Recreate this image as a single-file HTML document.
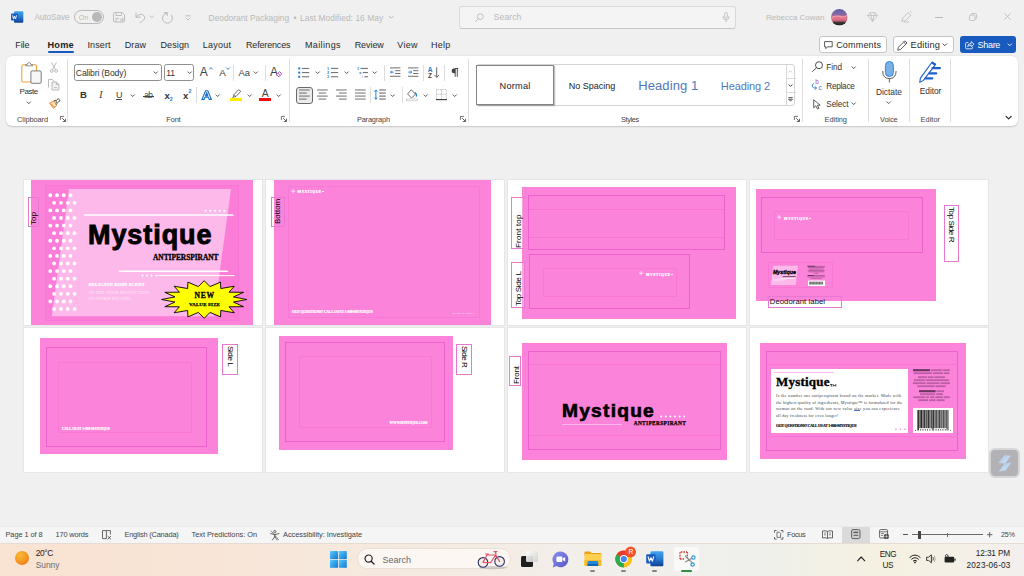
<!DOCTYPE html>
<html>
<head>
<meta charset="utf-8">
<title>Deodorant Packaging - Word</title>
<style>
*{box-sizing:border-box;margin:0;padding:0}
html,body{width:1024px;height:576px;overflow:hidden}
body{background:#f0f0f0;font-family:"Liberation Sans",sans-serif;position:relative;color:#262626}
.abs{position:absolute}
.t{position:absolute;white-space:nowrap;line-height:1}
svg{overflow:visible}
.page{position:absolute;background:#fff;box-shadow:0 0 0 0.9px #e5e5e5}
.pink{position:absolute;background:#fb83d9}
.ol{position:absolute;border:1px solid #ec62cc}
.ol2{position:absolute;border:1px solid #f977d5}
.lbl{position:absolute;border:1px solid #e879d2}
.rot{position:absolute;white-space:nowrap;line-height:1;font-size:8px;color:#000;transform-origin:0 0}
.vsep{position:absolute;width:1px;background:#dedede}
</style>
</head>
<body>
<div class="abs" style="left:0.00px;top:0.00px;width:1024.00px;height:56.00px;background:#f0f0f0"></div>
<svg class="abs" style="left:11.00px;top:11.00px;" width="12.50" height="12.00" viewBox="0 0 12.5 12"><defs><linearGradient id="wg" x1="0" y1="0" x2="0" y2="1"><stop offset="0" stop-color="#41a5ee"/><stop offset=".5" stop-color="#2b7cd3"/><stop offset="1" stop-color="#103f91"/></linearGradient></defs><rect x="3" y="0.3" width="9.3" height="11.4" rx="1" fill="url(#wg)"/><rect x="0" y="2.6" width="7" height="7" rx="0.8" fill="#185abd"/><path d="M1.5 4.3 L2.5 8 L3.5 5.2 L4.5 8 L5.5 4.3" fill="none" stroke="#fff" stroke-width="0.9" stroke-linejoin="round"/></svg>
<span class="t" style="left:34.40px;top:14.37px;font-size:8.20px;color:#b9b9b9;letter-spacing:-0.042px;">AutoSave</span>
<div class="abs" style="left:74.00px;top:10.30px;width:29.80px;height:13.50px;border:1px solid #b9b9b9;border-radius:7px"></div>
<span class="t" style="left:78.80px;top:14.39px;font-size:7.00px;color:#b9b9b9;letter-spacing:-0.096px;">On</span>
<div class="abs" style="left:92.10px;top:12.30px;width:9.50px;height:9.50px;background:#b9b9b9;border-radius:50%"></div>
<svg class="abs" style="left:113.00px;top:12.00px;" width="12.00" height="10.50" viewBox="0 0 12 10.5"><path d="M0.5 1.5 Q0.5 0.5 1.5 0.5 H9.5 L11.5 2.5 V9 Q11.5 10 10.5 10 H1.5 Q0.5 10 0.5 9 Z" fill="none" stroke="#b9b9b9" stroke-width="0.9"/><path d="M3 0.5 V3.5 H8.5 V0.5 M3 10 V6.5 H6" fill="none" stroke="#b9b9b9" stroke-width="0.9"/><path d="M7 7.2 H10.5 M9.3 6 L10.6 7.2 L9.3 8.4 M10.5 9 H7" fill="none" stroke="#b9b9b9" stroke-width="0.8"/></svg>
<svg class="abs" style="left:134.50px;top:11.50px;" width="11.00" height="11.00" viewBox="0 0 11 11"><path d="M1 1 V5.2 H5.2" fill="none" stroke="#b9b9b9" stroke-width="1" stroke-linecap="round" stroke-linejoin="round"/><path d="M1.2 5 C3 2.5 6.5 1.3 8.7 3.5 C10.8 5.6 9.5 8.3 5 10.6" fill="none" stroke="#b9b9b9" stroke-width="1" stroke-linecap="round"/></svg>
<svg class="abs" style="left:149.20px;top:15.20px;" width="5.60" height="4.60" viewBox="0 0 5.6 4.6"><path d="M1 0.90 L2.80 2.70 L4.60 0.90" fill="none" stroke="#b9b9b9" stroke-width="0.90" stroke-linecap="round" stroke-linejoin="round"/></svg>
<svg class="abs" style="left:162.00px;top:11.50px;" width="11.50" height="11.50" viewBox="0 0 11.5 11.5"><path d="M5 1.2 A5 5 0 1 0 9.5 3.2" fill="none" stroke="#b9b9b9" stroke-width="1" stroke-linecap="round"/><path d="M2.2 0.6 H5.2 V3.6" fill="none" stroke="#b9b9b9" stroke-width="1" stroke-linecap="round" stroke-linejoin="round"/></svg>
<svg class="abs" style="left:185.00px;top:14.50px;" width="6.00" height="6.00" viewBox="0 0 6 6"><path d="M0.6 0.8 H5.4" stroke="#b9b9b9" stroke-width="0.9"/><path d="M0.8 2.8 L3 5 L5.2 2.8" fill="none" stroke="#b9b9b9" stroke-width="0.9"/></svg>
<span class="t" style="left:208.60px;top:13.99px;font-size:8.40px;color:#b9b9b9;letter-spacing:-0.003px;">Deodorant Packaging</span>
<span class="t" style="left:293.40px;top:13.99px;font-size:8.40px;color:#b9b9b9;">&bull;</span>
<span class="t" style="left:300.00px;top:13.99px;font-size:8.40px;color:#b9b9b9;letter-spacing:0.062px;">Last Modified: 16 May</span>
<svg class="abs" style="left:387.50px;top:15.30px;" width="6.40" height="5.40" viewBox="0 0 6.4 5.4"><path d="M1 1.10 L3.20 3.30 L5.40 1.10" fill="none" stroke="#b9b9b9" stroke-width="1.00" stroke-linecap="round" stroke-linejoin="round"/></svg>
<div class="abs" style="left:458.80px;top:5.70px;width:277.50px;height:23.20px;background:#f4f4f4;border:1px solid #d9d9d9;border-bottom-color:#c4c4c4;border-radius:3px"></div>
<svg class="abs" style="left:474.50px;top:12.50px;" width="9.00" height="9.00" viewBox="0 0 9 9"><circle cx="5.4" cy="3.6" r="2.9" fill="none" stroke="#b9b9b9" stroke-width="0.9"/><path d="M3.3 5.7 L0.6 8.4" stroke="#b9b9b9" stroke-width="0.9" stroke-linecap="round"/></svg>
<span class="t" style="left:493.80px;top:13.10px;font-size:8.60px;color:#b9b9b9;letter-spacing:0.048px;">Search</span>
<svg class="abs" style="left:721.50px;top:12.00px;" width="8.00" height="10.50" viewBox="0 0 8 10.5"><rect x="2.6" y="0.5" width="2.8" height="5.6" rx="1.4" fill="none" stroke="#b9b9b9" stroke-width="0.8"/><path d="M1 4.5 Q1 8 4 8 Q7 8 7 4.5 M4 8 V10" fill="none" stroke="#b9b9b9" stroke-width="0.8" stroke-linecap="round"/></svg>
<span class="t" style="left:766.00px;top:13.90px;font-size:8.00px;color:#b9b9b9;letter-spacing:-0.024px;">Rebecca Cowan</span>
<svg class="abs" style="left:831.30px;top:9.10px;" width="16.60" height="16.60" viewBox="0 0 16.6 16.6"><defs><clipPath id="av"><circle cx="8.3" cy="8.3" r="8.3"/></clipPath><linearGradient id="sky" x1="0" y1="0" x2="0" y2="1"><stop offset="0" stop-color="#5a5f9e"/><stop offset=".35" stop-color="#8a6aa8"/><stop offset=".55" stop-color="#e8768c"/><stop offset=".72" stop-color="#c9607a"/><stop offset=".8" stop-color="#3a3a34"/><stop offset="1" stop-color="#20241e"/></linearGradient></defs><g clip-path="url(#av)"><rect width="16.6" height="16.6" fill="url(#sky)"/><path d="M1 8.5 Q5 6.5 9 7.5 T16 6.5" stroke="#f59aa0" stroke-width="1.4" fill="none"/></g></svg>
<svg class="abs" style="left:867.30px;top:11.50px;" width="11.00" height="10.00" viewBox="0 0 11 10"><path d="M3 0.6 H8 L10.4 3.5 L5.5 9.4 L0.6 3.5 Z M0.6 3.5 H10.4 M3 0.6 L4 3.5 L5.5 9.4 L7 3.5 L8 0.6" fill="none" stroke="#b9b9b9" stroke-width="0.7" stroke-linejoin="round"/></svg>
<svg class="abs" style="left:900.50px;top:11.00px;" width="11.00" height="12.00" viewBox="0 0 11 12"><path d="M7.2 1.5 L9.8 4.2 L4.5 9.6 L0.8 10.4 L1.6 7.2 Z" fill="none" stroke="#b9b9b9" stroke-width="0.8" stroke-linejoin="round"/><path d="M3.5 11 H7.5 M9.4 0.4 L10.2 1.2" stroke="#b9b9b9" stroke-width="0.8" stroke-linecap="round"/></svg>
<div class="abs" style="left:935.40px;top:16.50px;width:7.40px;height:1.00px;background:#b9b9b9"></div>
<svg class="abs" style="left:969.00px;top:13.00px;" width="8.00" height="8.00" viewBox="0 0 8 8"><rect x="0.5" y="2" width="5.5" height="5.5" rx="1.2" fill="none" stroke="#b9b9b9" stroke-width="0.8"/><path d="M2 2 V1.7 Q2 0.5 3.2 0.5 H6.3 Q7.5 0.5 7.5 1.7 V4.8 Q7.5 6 6.3 6" fill="none" stroke="#b9b9b9" stroke-width="0.8"/></svg>
<svg class="abs" style="left:1003.70px;top:13.40px;" width="7.00" height="7.00" viewBox="0 0 7 7"><path d="M0.3 0.3 L6.7 6.7 M6.7 0.3 L0.3 6.7" stroke="#b9b9b9" stroke-width="0.8"/></svg>
<span class="t" style="left:15.30px;top:41.23px;font-size:9.00px;color:#2a2a2a;letter-spacing:-0.119px;">File</span>
<span class="t" style="left:87.50px;top:41.23px;font-size:9.00px;color:#2a2a2a;letter-spacing:0.106px;">Insert</span>
<span class="t" style="left:124.80px;top:41.23px;font-size:9.00px;color:#2a2a2a;letter-spacing:0.053px;">Draw</span>
<span class="t" style="left:160.40px;top:41.23px;font-size:9.00px;color:#2a2a2a;letter-spacing:0.124px;">Design</span>
<span class="t" style="left:202.80px;top:41.23px;font-size:9.00px;color:#2a2a2a;letter-spacing:0.212px;">Layout</span>
<span class="t" style="left:246.00px;top:41.23px;font-size:9.00px;color:#2a2a2a;letter-spacing:-0.172px;">References</span>
<span class="t" style="left:305.00px;top:41.23px;font-size:9.00px;color:#2a2a2a;letter-spacing:0.358px;">Mailings</span>
<span class="t" style="left:354.70px;top:41.23px;font-size:9.00px;color:#2a2a2a;letter-spacing:-0.076px;">Review</span>
<span class="t" style="left:397.30px;top:41.23px;font-size:9.00px;color:#2a2a2a;letter-spacing:0.269px;">View</span>
<span class="t" style="left:431.10px;top:41.23px;font-size:9.00px;color:#2a2a2a;letter-spacing:0.224px;">Help</span>
<span class="t" style="left:47.50px;top:41.14px;font-size:9.20px;color:#1f1f1f;font-weight:bold;letter-spacing:0.220px;">Home</span>
<div class="abs" style="left:47.50px;top:51.40px;width:26.30px;height:2.00px;background:#185abd;border-radius:1px"></div>
<div class="abs" style="left:818.80px;top:36.10px;width:68.50px;height:17.00px;background:#fff;border:1px solid #c6c6c6;border-radius:3px"></div>
<svg class="abs" style="left:823.50px;top:40.50px;" width="9.00" height="8.50" viewBox="0 0 9 8.5"><path d="M0.6 0.6 H8.2 V5.8 H3.6 L1.8 7.6 V5.8 H0.6 Z" fill="none" stroke="#333" stroke-width="0.8" stroke-linejoin="round"/></svg>
<span class="t" style="left:836.20px;top:40.73px;font-size:9.00px;color:#2a2a2a;letter-spacing:0.185px;">Comments</span>
<div class="abs" style="left:893.40px;top:36.10px;width:60.80px;height:17.00px;background:#fff;border:1px solid #c6c6c6;border-radius:3px"></div>
<svg class="abs" style="left:896.50px;top:39.50px;" width="11.00" height="11.00" viewBox="0 0 11 11"><path d="M7.8 0.8 L10 3 L3.5 9.5 L0.7 10.2 L1.4 7.3 Z M6.6 2 L8.8 4.2" fill="none" stroke="#333" stroke-width="0.8" stroke-linejoin="round"/></svg>
<span class="t" style="left:910.60px;top:40.60px;font-size:9.30px;color:#2a2a2a;letter-spacing:0.148px;">Editing</span>
<svg class="abs" style="left:942.00px;top:43.00px;" width="5.60" height="4.60" viewBox="0 0 5.6 4.6"><path d="M1 0.90 L2.80 2.70 L4.60 0.90" fill="none" stroke="#333" stroke-width="0.90" stroke-linecap="round" stroke-linejoin="round"/></svg>
<div class="abs" style="left:960.30px;top:36.10px;width:55.40px;height:17.00px;background:#185abd;border-radius:3px"></div>
<svg class="abs" style="left:964.80px;top:40.00px;" width="9.50" height="9.50" viewBox="0 0 9.5 9.5"><path d="M3.4 2.6 H1.6 Q0.6 2.6 0.6 3.6 V7.8 Q0.6 8.8 1.6 8.8 H6.6 Q7.6 8.8 7.6 7.8 V6.8" fill="none" stroke="#fff" stroke-width="0.8"/><path d="M2.6 6.6 Q3 3.4 6.2 3.4 V1.6 L9 4.2 L6.2 6.8 V5 Q4 5 2.6 6.6 Z" fill="none" stroke="#fff" stroke-width="0.8" stroke-linejoin="round"/></svg>
<span class="t" style="left:977.50px;top:40.73px;font-size:9.00px;color:#fff;letter-spacing:-0.296px;">Share</span>
<svg class="abs" style="left:1006.80px;top:43.00px;" width="5.60" height="4.60" viewBox="0 0 5.6 4.6"><path d="M1 0.90 L2.80 2.70 L4.60 0.90" fill="none" stroke="#fff" stroke-width="0.90" stroke-linecap="round" stroke-linejoin="round"/></svg>
<div class="abs" style="left:6.00px;top:56.00px;width:1012.30px;height:70.00px;background:#fff;border-radius:6px;box-shadow:0 0.5px 1.5px rgba(0,0,0,.18)"></div>
<div class="vsep" style="left:67.3px;top:59px;height:63px"></div>
<div class="vsep" style="left:289.2px;top:59px;height:63px"></div>
<div class="vsep" style="left:468.4px;top:59px;height:63px"></div>
<div class="vsep" style="left:802.3px;top:59px;height:63px"></div>
<div class="vsep" style="left:868.0px;top:59px;height:63px"></div>
<div class="vsep" style="left:909.2px;top:59px;height:63px"></div>
<div class="vsep" style="left:950.0px;top:59px;height:63px"></div>
<svg class="abs" style="left:20.50px;top:61.50px;" width="21.00" height="22.00" viewBox="0 0 21 22"><rect x="0.8" y="2.8" width="14.6" height="17.2" rx="1.2" fill="#fff" stroke="#f2a33a" stroke-width="1.1"/><path d="M4.6 3.8 V2.6 H6.2 Q6.4 0.6 8.1 0.6 Q9.8 0.6 10 2.6 H11.6 V3.8 Z" fill="#fff" stroke="#777" stroke-width="0.8" stroke-linejoin="round"/><rect x="9.9" y="8.9" width="10.3" height="12.4" rx="1.2" fill="#f7f7f7" stroke="#777" stroke-width="0.95"/></svg>
<span class="t" style="left:19.60px;top:88.16px;font-size:8.00px;color:#333;letter-spacing:-0.460px;">Paste</span>
<svg class="abs" style="left:25.80px;top:101.20px;" width="5.60" height="4.60" viewBox="0 0 5.6 4.6"><path d="M1 0.90 L2.80 2.70 L4.60 0.90" fill="none" stroke="#444" stroke-width="0.90" stroke-linecap="round" stroke-linejoin="round"/></svg>
<svg class="abs" style="left:50.00px;top:62.00px;" width="8.00" height="11.00" viewBox="0 0 8 11"><path d="M1.6 0.4 L5.4 7.6 M6.4 0.4 L2.6 7.6" stroke="#aaa" stroke-width="0.8" fill="none"/><circle cx="1.9" cy="8.9" r="1.4" fill="none" stroke="#aaa" stroke-width="0.8"/><circle cx="6.1" cy="8.9" r="1.4" fill="none" stroke="#aaa" stroke-width="0.8"/></svg>
<svg class="abs" style="left:48.30px;top:79.30px;" width="11.50" height="11.50" viewBox="0 0 11.5 11.5"><path d="M0.5 8.6 V0.5 H4.6 L6.4 2.3" fill="none" stroke="#b5b5b5" stroke-width="0.9"/><path d="M4 3 H8.4 L10.9 5.5 V11 H4 Z" fill="#f2f2f2" stroke="#b0b0b0" stroke-width="0.9"/><path d="M8.4 3 V5.5 H10.9 M6 8.6 H9" fill="none" stroke="#b0b0b0" stroke-width="0.8"/></svg>
<svg class="abs" style="left:48.60px;top:98.00px;" width="11.60" height="10.80" viewBox="0 0 11.6 10.8"><path d="M0.7 5.2 L5.2 2.8 L7.6 7.6 L4.4 10.2 Z" fill="#fbe3c4" stroke="#e8872a" stroke-width="1" stroke-linejoin="round"/><path d="M1.6 5.6 L5.6 9.2" stroke="#e8872a" stroke-width="0.8"/><path d="M5.2 2.8 L6.4 2 L8.2 5.6 L7.2 6.4 M7.2 2.6 L9.4 0.6 L11 2.8 L8.6 4.6" fill="none" stroke="#444" stroke-width="0.9" stroke-linejoin="round"/></svg>
<span class="t" style="left:17.10px;top:115.58px;font-size:7.40px;color:#444;letter-spacing:-0.087px;">Clipboard</span>
<svg class="abs" style="left:59.60px;top:116.40px;" width="6.00" height="6.00" viewBox="0 0 6 6"><path d="M0.4 4 V0.4 H4" fill="none" stroke="#555" stroke-width="0.8"/><path d="M2.2 2.2 L5.4 5.4 M5.5 2.8 V5.5 H2.8" fill="none" stroke="#555" stroke-width="0.9"/></svg>
<div class="abs" style="left:74.40px;top:64.10px;width:87.20px;height:16.60px;border:1px solid #8f8f8f;border-radius:2.5px;background:#fff"></div>
<span class="t" style="left:75.80px;top:68.90px;font-size:8.60px;color:#333;letter-spacing:-0.123px;">Calibri (Body)</span>
<svg class="abs" style="left:153.00px;top:71.10px;" width="5.40" height="4.40" viewBox="0 0 5.4 4.4"><path d="M1 0.85 L2.70 2.55 L4.40 0.85" fill="none" stroke="#444" stroke-width="0.90" stroke-linecap="round" stroke-linejoin="round"/></svg>
<div class="abs" style="left:164.00px;top:64.10px;width:30.40px;height:16.60px;border:1px solid #8f8f8f;border-radius:2.5px;background:#fff"></div>
<span class="t" style="left:166.20px;top:68.90px;font-size:8.60px;color:#333;">11</span>
<svg class="abs" style="left:187.30px;top:71.10px;" width="5.40" height="4.40" viewBox="0 0 5.4 4.4"><path d="M1 0.85 L2.70 2.55 L4.40 0.85" fill="none" stroke="#444" stroke-width="0.90" stroke-linecap="round" stroke-linejoin="round"/></svg>
<span class="t" style="left:199.80px;top:66.24px;font-size:12.00px;color:#444;width:8.4px;">A</span>
<svg class="abs" style="left:208.60px;top:67.20px;" width="4.00" height="3.00" viewBox="0 0 4 3"><path d="M0.4 2.4 L2 0.6 L3.6 2.4" fill="none" stroke="#1e7ad1" stroke-width="0.9"/></svg>
<span class="t" style="left:219.20px;top:68.09px;font-size:9.80px;color:#444;">A</span>
<svg class="abs" style="left:226.40px;top:67.40px;" width="4.00" height="3.00" viewBox="0 0 4 3"><path d="M0.4 0.6 L2 2.4 L3.6 0.6" fill="none" stroke="#1e7ad1" stroke-width="0.9"/></svg>
<div class="vsep" style="left:233px;top:64.5px;height:16px"></div>
<span class="t" style="left:238.60px;top:67.86px;font-size:9.40px;color:#444;letter-spacing:-0.046px;">Aa</span>
<svg class="abs" style="left:253.30px;top:71.10px;" width="5.40" height="4.40" viewBox="0 0 5.4 4.4"><path d="M1 0.85 L2.70 2.55 L4.40 0.85" fill="none" stroke="#444" stroke-width="0.90" stroke-linecap="round" stroke-linejoin="round"/></svg>
<div class="vsep" style="left:265.2px;top:64.5px;height:16px"></div>
<span class="t" style="left:270.00px;top:66.24px;font-size:12.00px;color:#444;">A</span>
<svg class="abs" style="left:276.40px;top:71.20px;" width="6.40" height="6.40" viewBox="0 0 6.4 6.4"><path d="M3.6 0.6 L5.8 2.8 L2.8 5.8 L0.6 3.6 Z" fill="#fff" stroke="#b146c2" stroke-width="1" stroke-linejoin="round"/><path d="M2 2.2 L4.2 4.4" stroke="#b146c2" stroke-width="0.8"/></svg>
<span class="t" style="left:80.00px;top:90.47px;font-size:9.60px;color:#333;font-weight:bold;">B</span>
<span class="t" style="left:99.20px;top:90.47px;font-size:9.60px;color:#333;font-style:italic;font-family:'Liberation Serif',serif;">I</span>
<span class="t" style="left:115.90px;top:90.73px;font-size:9.00px;color:#444;">U</span>
<div class="abs" style="left:115.80px;top:99.00px;width:6.40px;height:0.90px;background:#444"></div>
<svg class="abs" style="left:130.20px;top:93.60px;" width="5.40" height="4.40" viewBox="0 0 5.4 4.4"><path d="M1 0.85 L2.70 2.55 L4.40 0.85" fill="none" stroke="#444" stroke-width="0.90" stroke-linecap="round" stroke-linejoin="round"/></svg>
<span class="t" style="left:144.20px;top:91.39px;font-size:8.40px;color:#444;letter-spacing:-0.485px;">ab</span>
<div class="abs" style="left:143.00px;top:95.70px;width:11.20px;height:0.90px;background:#444"></div>
<span class="t" style="left:164.60px;top:91.07px;font-size:9.60px;color:#333;font-weight:bold;">x</span>
<span class="t" style="left:169.80px;top:97.06px;font-size:5.20px;color:#1e7ad1;font-weight:bold;">2</span>
<span class="t" style="left:183.00px;top:91.07px;font-size:9.60px;color:#333;font-weight:bold;">x</span>
<span class="t" style="left:188.50px;top:89.36px;font-size:5.20px;color:#1e7ad1;font-weight:bold;">2</span>
<div class="vsep" style="left:195.5px;top:87.3px;height:16.2px"></div>
<svg class="abs" style="left:200.80px;top:90.00px;" width="11.40" height="10.20" viewBox="0 0 11.4 10.2"><path d="M1 9.4 L4.6 0.8 H6.8 L10.4 9.4 H8.2 L7.4 7.2 H4 L3.2 9.4 Z M4.6 5.6 H6.8 L5.7 2.6 Z" fill="#fff" stroke="#1a6fc9" stroke-width="1.15" stroke-linejoin="round" fill-rule="evenodd"/></svg>
<svg class="abs" style="left:215.30px;top:93.60px;" width="5.40" height="4.40" viewBox="0 0 5.4 4.4"><path d="M1 0.85 L2.70 2.55 L4.40 0.85" fill="none" stroke="#444" stroke-width="0.90" stroke-linecap="round" stroke-linejoin="round"/></svg>
<svg class="abs" style="left:231.00px;top:88.60px;" width="11.00" height="9.60" viewBox="0 0 11 9.6"><path d="M7.6 0.7 L9.8 2.3 L4.9 7.6 L2.4 8.1 L2.9 5.7 Z" fill="#fff" stroke="#555" stroke-width="0.85" stroke-linejoin="round"/><path d="M2.9 5.7 L4.9 7.6 M2.4 8.1 L1 9.2" stroke="#555" stroke-width="0.8"/></svg>
<div class="abs" style="left:230.30px;top:98.20px;width:11.60px;height:2.60px;background:#ffe900"></div>
<svg class="abs" style="left:246.70px;top:93.60px;" width="5.40" height="4.40" viewBox="0 0 5.4 4.4"><path d="M1 0.85 L2.70 2.55 L4.40 0.85" fill="none" stroke="#444" stroke-width="0.90" stroke-linecap="round" stroke-linejoin="round"/></svg>
<span class="t" style="left:261.70px;top:89.43px;font-size:10.40px;color:#444;">A</span>
<div class="abs" style="left:259.40px;top:98.20px;width:11.60px;height:2.60px;background:#f20d0d"></div>
<svg class="abs" style="left:275.80px;top:93.60px;" width="5.40" height="4.40" viewBox="0 0 5.4 4.4"><path d="M1 0.85 L2.70 2.55 L4.40 0.85" fill="none" stroke="#444" stroke-width="0.90" stroke-linecap="round" stroke-linejoin="round"/></svg>
<span class="t" style="left:166.30px;top:115.58px;font-size:7.40px;color:#444;letter-spacing:-0.142px;">Font</span>
<svg class="abs" style="left:281.30px;top:116.40px;" width="6.00" height="6.00" viewBox="0 0 6 6"><path d="M0.4 4 V0.4 H4" fill="none" stroke="#555" stroke-width="0.8"/><path d="M2.2 2.2 L5.4 5.4 M5.5 2.8 V5.5 H2.8" fill="none" stroke="#555" stroke-width="0.9"/></svg>
<svg class="abs" style="left:298.40px;top:66.60px;" width="11.40" height="11.40" viewBox="0 0 11.4 11.4"><rect x="0.2" y="0.40" width="2" height="2" fill="#1e7ad1"/><path d="M3.9 1.40 H11.2" stroke="#666" stroke-width="1"/><rect x="0.2" y="4.60" width="2" height="2" fill="#1e7ad1"/><path d="M3.9 5.60 H11.2" stroke="#666" stroke-width="1"/><rect x="0.2" y="8.80" width="2" height="2" fill="#1e7ad1"/><path d="M3.9 9.80 H11.2" stroke="#666" stroke-width="1"/></svg>
<svg class="abs" style="left:315.20px;top:70.80px;" width="5.40" height="4.40" viewBox="0 0 5.4 4.4"><path d="M1 0.85 L2.70 2.55 L4.40 0.85" fill="none" stroke="#444" stroke-width="0.90" stroke-linecap="round" stroke-linejoin="round"/></svg>
<svg class="abs" style="left:327.40px;top:66.60px;" width="11.40" height="11.40" viewBox="0 0 11.4 11.4"><text x="0" y="2.80" font-family="Liberation Sans" font-size="3.8" font-weight="bold" fill="#1e7ad1">1</text><path d="M3.9 1.40 H11.2" stroke="#666" stroke-width="1"/><text x="0" y="7.00" font-family="Liberation Sans" font-size="3.8" font-weight="bold" fill="#1e7ad1">2</text><path d="M3.9 5.60 H11.2" stroke="#666" stroke-width="1"/><text x="0" y="11.20" font-family="Liberation Sans" font-size="3.8" font-weight="bold" fill="#1e7ad1">3</text><path d="M3.9 9.80 H11.2" stroke="#666" stroke-width="1"/></svg>
<svg class="abs" style="left:344.20px;top:70.80px;" width="5.40" height="4.40" viewBox="0 0 5.4 4.4"><path d="M1 0.85 L2.70 2.55 L4.40 0.85" fill="none" stroke="#444" stroke-width="0.90" stroke-linecap="round" stroke-linejoin="round"/></svg>
<svg class="abs" style="left:356.90px;top:66.60px;" width="11.40" height="11.40" viewBox="0 0 11.4 11.4"><text x="0" y="2.8" font-family="Liberation Sans" font-size="3.8" font-weight="bold" fill="#1e7ad1">1</text><path d="M3.6 1.4 H11" stroke="#666" stroke-width="1"/><text x="2.2" y="7" font-family="Liberation Sans" font-size="3.8" font-weight="bold" fill="#1e7ad1">a</text><path d="M5.8 5.6 H11" stroke="#666" stroke-width="1"/><text x="5" y="11.2" font-family="Liberation Sans" font-size="3.8" font-weight="bold" fill="#7db5ea">i</text><path d="M7.4 9.8 H11" stroke="#666" stroke-width="1"/></svg>
<svg class="abs" style="left:371.90px;top:70.80px;" width="5.40" height="4.40" viewBox="0 0 5.4 4.4"><path d="M1 0.85 L2.70 2.55 L4.40 0.85" fill="none" stroke="#444" stroke-width="0.90" stroke-linecap="round" stroke-linejoin="round"/></svg>
<div class="vsep" style="left:384px;top:64.5px;height:16px"></div>
<svg class="abs" style="left:389.60px;top:67.10px;" width="10.60" height="10.40" viewBox="0 0 10.6 10.4"><path d="M0.00 0.90 H10.40" stroke="#666" stroke-width="0.95"/><path d="M5.20 3.70 H10.40" stroke="#666" stroke-width="0.95"/><path d="M5.20 6.50 H10.40" stroke="#666" stroke-width="0.95"/><path d="M0.00 9.30 H10.40" stroke="#666" stroke-width="0.95"/><path d="M3.9 5.1 H0.5 M1.9 3.6 L0.4 5.1 L1.9 6.6" fill="none" stroke="#1e7ad1" stroke-width="0.9"/></svg>
<svg class="abs" style="left:407.70px;top:67.10px;" width="10.60" height="10.40" viewBox="0 0 10.6 10.4"><path d="M0.00 0.90 H10.40" stroke="#666" stroke-width="0.95"/><path d="M5.20 3.70 H10.40" stroke="#666" stroke-width="0.95"/><path d="M5.20 6.50 H10.40" stroke="#666" stroke-width="0.95"/><path d="M0.00 9.30 H10.40" stroke="#666" stroke-width="0.95"/><path d="M0.3 5.1 H3.7 M2.3 3.6 L3.8 5.1 L2.3 6.6" fill="none" stroke="#1e7ad1" stroke-width="0.9"/></svg>
<div class="vsep" style="left:423px;top:64.5px;height:16px"></div>
<span class="t" style="left:427.80px;top:66.86px;font-size:6.60px;color:#1e7ad1;font-weight:bold;">A</span>
<span class="t" style="left:428.00px;top:73.15px;font-size:6.40px;color:#444;font-weight:bold;">Z</span>
<svg class="abs" style="left:434.40px;top:67.00px;" width="5.40" height="11.20" viewBox="0 0 5.4 11.2"><path d="M2.7 0.3 V10.2 M0.5 8 L2.7 10.4 L4.9 8" fill="none" stroke="#555" stroke-width="0.9"/></svg>
<div class="vsep" style="left:444px;top:64.5px;height:16px"></div>
<svg class="abs" style="left:451.00px;top:67.80px;" width="7.40" height="9.00" viewBox="0 0 7.4 9"><path d="M4 0.5 H7.2 M4.2 0.5 V8.8 M6.3 0.5 V8.8" stroke="#444" stroke-width="0.95" fill="none"/><path d="M4.2 0.5 H3 A2.4 2.4 0 0 0 3 5.3 H4.2 Z" fill="#444"/></svg>
<div class="abs" style="left:296.00px;top:86.60px;width:17.00px;height:17.20px;background:#ebebeb;border:1px solid #6a6a6a;border-radius:3px"></div>
<svg class="abs" style="left:298.70px;top:89.40px;" width="10.70" height="11.20" viewBox="0 0 10.7 11.2"><path d="M0.00 1.00 H10.70" stroke="#555" stroke-width="0.85"/><path d="M0.00 4.05 H7.70" stroke="#555" stroke-width="0.85"/><path d="M0.00 7.10 H10.70" stroke="#555" stroke-width="0.85"/><path d="M0.00 10.10 H7.70" stroke="#555" stroke-width="0.85"/></svg>
<svg class="abs" style="left:317.40px;top:89.40px;" width="10.70" height="11.20" viewBox="0 0 10.7 11.2"><path d="M0.00 1.00 H10.70" stroke="#555" stroke-width="0.85"/><path d="M1.60 4.05 H9.10" stroke="#555" stroke-width="0.85"/><path d="M0.00 7.10 H10.70" stroke="#555" stroke-width="0.85"/><path d="M1.60 10.10 H9.10" stroke="#555" stroke-width="0.85"/></svg>
<svg class="abs" style="left:335.80px;top:89.40px;" width="10.70" height="11.20" viewBox="0 0 10.7 11.2"><path d="M0.00 1.00 H10.70" stroke="#555" stroke-width="0.85"/><path d="M3.00 4.05 H10.70" stroke="#555" stroke-width="0.85"/><path d="M0.00 7.10 H10.70" stroke="#555" stroke-width="0.85"/><path d="M3.00 10.10 H10.70" stroke="#555" stroke-width="0.85"/></svg>
<svg class="abs" style="left:354.60px;top:89.40px;" width="10.70" height="11.20" viewBox="0 0 10.7 11.2"><path d="M0.00 1.00 H10.70" stroke="#555" stroke-width="0.85"/><path d="M0.00 4.05 H10.70" stroke="#555" stroke-width="0.85"/><path d="M0.00 7.10 H10.70" stroke="#555" stroke-width="0.85"/><path d="M0.00 10.10 H10.70" stroke="#555" stroke-width="0.85"/></svg>
<div class="vsep" style="left:369.9px;top:87.3px;height:16.2px"></div>
<svg class="abs" style="left:374.40px;top:89.40px;" width="12.00" height="11.40" viewBox="0 0 12 11.4"><path d="M5.20 1.00 H11.80" stroke="#555" stroke-width="0.95"/><path d="M5.20 4.05 H11.80" stroke="#555" stroke-width="0.95"/><path d="M5.20 7.10 H11.80" stroke="#555" stroke-width="0.95"/><path d="M5.20 10.10 H11.80" stroke="#555" stroke-width="0.95"/><path d="M1.9 1 V10.2 M0.4 2.6 L1.9 0.9 L3.4 2.6 M0.4 8.6 L1.9 10.3 L3.4 8.6" fill="none" stroke="#1e7ad1" stroke-width="0.95"/></svg>
<svg class="abs" style="left:389.80px;top:93.60px;" width="5.40" height="4.40" viewBox="0 0 5.4 4.4"><path d="M1 0.85 L2.70 2.55 L4.40 0.85" fill="none" stroke="#444" stroke-width="0.90" stroke-linecap="round" stroke-linejoin="round"/></svg>
<div class="vsep" style="left:402.1px;top:87.3px;height:16.2px"></div>
<svg class="abs" style="left:406.40px;top:88.60px;" width="12.00" height="12.20" viewBox="0 0 12 12.2"><path d="M5.2 0.8 L9.6 5.2 L5.6 9 L1.6 5 Z" fill="#fff" stroke="#555" stroke-width="0.85" stroke-linejoin="round"/><path d="M8.8 3.4 Q11 4.4 10.4 7.6" fill="none" stroke="#1e7ad1" stroke-width="1.1"/><rect x="0.4" y="10" width="11.2" height="1.8" fill="#fff" stroke="#bdbdbd" stroke-width="0.6"/></svg>
<svg class="abs" style="left:423.20px;top:93.60px;" width="5.40" height="4.40" viewBox="0 0 5.4 4.4"><path d="M1 0.85 L2.70 2.55 L4.40 0.85" fill="none" stroke="#444" stroke-width="0.90" stroke-linecap="round" stroke-linejoin="round"/></svg>
<svg class="abs" style="left:435.80px;top:88.80px;" width="11.00" height="11.40" viewBox="0 0 11 11.4"><path d="M0.5 0.5 H10.5 V10 M0.5 0.5 V10 M5.5 0.5 V10 M0.5 5.4 H10.5" fill="none" stroke="#a9a9a9" stroke-width="0.7" stroke-dasharray="1 0.7"/><path d="M0 10.6 H11" stroke="#444" stroke-width="1.2"/></svg>
<svg class="abs" style="left:452.30px;top:93.60px;" width="5.40" height="4.40" viewBox="0 0 5.4 4.4"><path d="M1 0.85 L2.70 2.55 L4.40 0.85" fill="none" stroke="#444" stroke-width="0.90" stroke-linecap="round" stroke-linejoin="round"/></svg>
<span class="t" style="left:356.90px;top:115.58px;font-size:7.40px;color:#444;letter-spacing:-0.167px;">Paragraph</span>
<svg class="abs" style="left:460.00px;top:116.40px;" width="6.00" height="6.00" viewBox="0 0 6 6"><path d="M0.4 4 V0.4 H4" fill="none" stroke="#555" stroke-width="0.8"/><path d="M2.2 2.2 L5.4 5.4 M5.5 2.8 V5.5 H2.8" fill="none" stroke="#555" stroke-width="0.9"/></svg>
<div class="abs" style="left:475.90px;top:64.40px;width:319.60px;height:42.00px;border:1px solid #d4d4d4;border-radius:3px;background:#fff"></div>
<div class="abs" style="left:475.90px;top:64.90px;width:78.60px;height:40.20px;border:1.3px solid #858585;background:#fff;box-shadow:0.5px 0.8px 1.2px rgba(0,0,0,.3)"></div>
<span class="t" style="left:499.50px;top:81.74px;font-size:9.20px;color:#222;letter-spacing:0.253px;">Normal</span>
<span class="t" style="left:568.80px;top:81.83px;font-size:9.00px;color:#222;letter-spacing:-0.003px;">No Spacing</span>
<span class="t" style="left:638.20px;top:79.21px;font-size:13.00px;color:#5079bb;letter-spacing:0.108px;">Heading 1</span>
<span class="t" style="left:720.80px;top:80.67px;font-size:11.00px;color:#5079bb;letter-spacing:-0.112px;">Heading 2</span>
<div class="abs" style="left:785.50px;top:64.40px;width:1.00px;height:42.00px;background:#d9d9d9"></div>
<div class="abs" style="left:785.50px;top:78.20px;width:10.00px;height:1.00px;background:#d9d9d9"></div>
<div class="abs" style="left:785.50px;top:92.20px;width:10.00px;height:1.00px;background:#d9d9d9"></div>
<svg class="abs" style="left:788.40px;top:70.00px;" width="4.60" height="3.00" viewBox="0 0 4.6 3"><path d="M0.4 2.4 L2.3 0.6 L4.2 2.4" fill="none" stroke="#c2c2c2" stroke-width="0.8"/></svg>
<svg class="abs" style="left:788.10px;top:83.80px;" width="5.20" height="4.20" viewBox="0 0 5.2 4.2"><path d="M1 0.80 L2.60 2.40 L4.20 0.80" fill="none" stroke="#333" stroke-width="0.90" stroke-linecap="round" stroke-linejoin="round"/></svg>
<svg class="abs" style="left:788.30px;top:96.80px;" width="5.00" height="5.00" viewBox="0 0 5 5"><path d="M0.4 0.6 H4.6" stroke="#333" stroke-width="0.8"/><path d="M0.6 2.2 L2.5 4.2 L4.4 2.2 Z" fill="none" stroke="#333" stroke-width="0.8"/></svg>
<span class="t" style="left:621.00px;top:115.58px;font-size:7.40px;color:#444;letter-spacing:-0.389px;">Styles</span>
<svg class="abs" style="left:794.40px;top:116.40px;" width="6.00" height="6.00" viewBox="0 0 6 6"><path d="M0.4 4 V0.4 H4" fill="none" stroke="#555" stroke-width="0.8"/><path d="M2.2 2.2 L5.4 5.4 M5.5 2.8 V5.5 H2.8" fill="none" stroke="#555" stroke-width="0.9"/></svg>
<svg class="abs" style="left:811.80px;top:61.20px;" width="11.40" height="11.00" viewBox="0 0 11.4 11"><circle cx="7" cy="4.2" r="3.5" fill="none" stroke="#444" stroke-width="0.95"/><path d="M4.4 6.8 L0.6 10.4" stroke="#444" stroke-width="0.95" stroke-linecap="round"/></svg>
<span class="t" style="left:826.30px;top:63.77px;font-size:8.20px;color:#333;letter-spacing:-0.096px;">Find</span>
<svg class="abs" style="left:850.70px;top:65.50px;" width="5.40" height="4.40" viewBox="0 0 5.4 4.4"><path d="M1 0.85 L2.70 2.55 L4.40 0.85" fill="none" stroke="#444" stroke-width="0.90" stroke-linecap="round" stroke-linejoin="round"/></svg>
<svg class="abs" style="left:811.20px;top:79.40px;" width="11.60" height="11.40" viewBox="0 0 11.6 11.4"><text x="4.2" y="5" font-family="Liberation Sans" font-size="6.4" fill="#b146c2">b</text><text x="7.4" y="10.8" font-family="Liberation Sans" font-size="6.4" fill="#1e7ad1">c</text><path d="M3.2 4.4 Q0.4 5.2 1.4 7.8 Q2.2 9.4 5.4 9 M3.8 7.4 L5.6 9 L3.8 10.6" fill="none" stroke="#1e7ad1" stroke-width="0.9"/></svg>
<span class="t" style="left:826.30px;top:82.57px;font-size:8.20px;color:#333;letter-spacing:-0.253px;">Replace</span>
<svg class="abs" style="left:812.60px;top:98.80px;" width="8.40" height="10.60" viewBox="0 0 8.4 10.6"><path d="M0.7 0.8 V8.8 L2.9 6.8 L4.5 10 L5.9 9.3 L4.4 6.2 H7.2 Z" fill="#fff" stroke="#444" stroke-width="0.85" stroke-linejoin="round"/></svg>
<span class="t" style="left:826.30px;top:100.87px;font-size:8.20px;color:#333;letter-spacing:-0.121px;">Select</span>
<svg class="abs" style="left:851.10px;top:102.30px;" width="5.40" height="4.40" viewBox="0 0 5.4 4.4"><path d="M1 0.85 L2.70 2.55 L4.40 0.85" fill="none" stroke="#444" stroke-width="0.90" stroke-linecap="round" stroke-linejoin="round"/></svg>
<span class="t" style="left:824.60px;top:115.58px;font-size:7.40px;color:#444;letter-spacing:-0.048px;">Editing</span>
<svg class="abs" style="left:881.60px;top:61.00px;" width="14.80" height="21.40" viewBox="0 0 14.8 21.4"><rect x="3.4" y="0.5" width="8" height="15" rx="4" fill="#78b1e8" stroke="#2b7cd3" stroke-width="0.9"/><path d="M0.7 10.4 Q0.7 17.6 7.4 17.6 Q14.1 17.6 14.1 10.4 M7.4 17.6 V21" fill="none" stroke="#555" stroke-width="0.95" stroke-linecap="round"/></svg>
<span class="t" style="left:875.90px;top:87.79px;font-size:8.40px;color:#333;letter-spacing:-0.012px;">Dictate</span>
<svg class="abs" style="left:886.30px;top:101.10px;" width="5.40" height="4.40" viewBox="0 0 5.4 4.4"><path d="M1 0.85 L2.70 2.55 L4.40 0.85" fill="none" stroke="#444" stroke-width="0.90" stroke-linecap="round" stroke-linejoin="round"/></svg>
<span class="t" style="left:880.00px;top:115.58px;font-size:7.40px;color:#444;letter-spacing:-0.132px;">Voice</span>
<svg class="abs" style="left:919.40px;top:60.60px;" width="22.00" height="22.40" viewBox="0 0 22 22.4"><path d="M13 1.2 L16.6 3.4 L4.4 19.4 L0.8 21.4 L1.4 17.2 Z" fill="#fff" stroke="#1c5fcf" stroke-width="1.1" stroke-linejoin="round"/><path d="M12.6 1.4 L16.4 3.8" stroke="#1c5fcf" stroke-width="2.2"/><path d="M13.6 7.2 H20.8 M10.4 12.4 H17.2 M6.8 17.4 H13.2" stroke="#1c5fcf" stroke-width="2.3" stroke-linecap="round"/></svg>
<span class="t" style="left:919.80px;top:86.59px;font-size:8.40px;color:#333;letter-spacing:-0.071px;">Editor</span>
<span class="t" style="left:920.60px;top:115.58px;font-size:7.40px;color:#444;letter-spacing:0.016px;">Editor</span>
<svg class="abs" style="left:1004.90px;top:114.70px;" width="7.20" height="6.20" viewBox="0 0 7.2 6.2"><path d="M1 1.30 L3.60 3.90 L6.20 1.30" fill="none" stroke="#222" stroke-width="1.10" stroke-linecap="round" stroke-linejoin="round"/></svg>
<div class="page" style="left:24px;top:180px;width:238.2px;height:144.5px"></div>
<div class="page" style="left:266px;top:180px;width:238.2px;height:144.5px"></div>
<div class="page" style="left:508px;top:180px;width:238.2px;height:144.5px"></div>
<div class="page" style="left:750px;top:180px;width:238.2px;height:144.5px"></div>
<div class="page" style="left:24px;top:328px;width:238.2px;height:144px"></div>
<div class="page" style="left:266px;top:328px;width:238.2px;height:144px"></div>
<div class="page" style="left:508px;top:328px;width:238.2px;height:144px"></div>
<div class="page" style="left:750px;top:328px;width:238.2px;height:144px"></div>
<div class="pink" style="left:31.00px;top:180.00px;width:222.00px;height:144.60px;"></div>
<div class="abs" style="left:45.00px;top:185.00px;width:194.00px;height:135.60px;background:#fb7dd7;border:1px solid #fa75d5"></div>
<svg class="abs" style="left:31.00px;top:180.00px;" width="222.00" height="145.00" viewBox="0 0 222 145"><polygon points="38,9 200,9 182.8,136.3 20.8,136.3" fill="#fdb9ea"/></svg>
<svg class="abs" style="left:31.00px;top:180.00px;" width="222.00" height="145.00" viewBox="0 0 222 145"><g fill="#fff"><circle cx="19.25" cy="15.25" r="1.9"/><circle cx="26.00" cy="15.25" r="1.9"/><circle cx="32.80" cy="15.25" r="1.9"/><circle cx="39.50" cy="15.25" r="1.9"/><circle cx="23.10" cy="22.84" r="1.9"/><circle cx="30.00" cy="22.84" r="1.9"/><circle cx="36.80" cy="22.84" r="1.9"/><circle cx="43.50" cy="22.84" r="1.9"/><circle cx="19.25" cy="30.42" r="1.9"/><circle cx="26.00" cy="30.42" r="1.9"/><circle cx="32.80" cy="30.42" r="1.9"/><circle cx="39.50" cy="30.42" r="1.9"/><circle cx="23.10" cy="38.00" r="1.9"/><circle cx="30.00" cy="38.00" r="1.9"/><circle cx="36.80" cy="38.00" r="1.9"/><circle cx="43.50" cy="38.00" r="1.9"/><circle cx="19.25" cy="45.59" r="1.9"/><circle cx="26.00" cy="45.59" r="1.9"/><circle cx="32.80" cy="45.59" r="1.9"/><circle cx="39.50" cy="45.59" r="1.9"/><circle cx="23.10" cy="53.18" r="1.9"/><circle cx="30.00" cy="53.18" r="1.9"/><circle cx="36.80" cy="53.18" r="1.9"/><circle cx="43.50" cy="53.18" r="1.9"/><circle cx="19.25" cy="60.76" r="1.9"/><circle cx="26.00" cy="60.76" r="1.9"/><circle cx="32.80" cy="60.76" r="1.9"/><circle cx="39.50" cy="60.76" r="1.9"/><circle cx="23.10" cy="68.34" r="1.9"/><circle cx="30.00" cy="68.34" r="1.9"/><circle cx="36.80" cy="68.34" r="1.9"/><circle cx="43.50" cy="68.34" r="1.9"/><circle cx="19.25" cy="75.93" r="1.9"/><circle cx="26.00" cy="75.93" r="1.9"/><circle cx="32.80" cy="75.93" r="1.9"/><circle cx="39.50" cy="75.93" r="1.9"/><circle cx="23.10" cy="83.51" r="1.9"/><circle cx="30.00" cy="83.51" r="1.9"/><circle cx="36.80" cy="83.51" r="1.9"/><circle cx="43.50" cy="83.51" r="1.9"/><circle cx="19.25" cy="91.10" r="1.9"/><circle cx="26.00" cy="91.10" r="1.9"/><circle cx="32.80" cy="91.10" r="1.9"/><circle cx="39.50" cy="91.10" r="1.9"/><circle cx="23.10" cy="98.69" r="1.9"/><circle cx="30.00" cy="98.69" r="1.9"/><circle cx="36.80" cy="98.69" r="1.9"/><circle cx="43.50" cy="98.69" r="1.9"/><circle cx="19.25" cy="106.27" r="1.9"/><circle cx="26.00" cy="106.27" r="1.9"/><circle cx="32.80" cy="106.27" r="1.9"/><circle cx="39.50" cy="106.27" r="1.9"/><circle cx="23.10" cy="113.86" r="1.9"/><circle cx="30.00" cy="113.86" r="1.9"/><circle cx="36.80" cy="113.86" r="1.9"/><circle cx="43.50" cy="113.86" r="1.9"/><circle cx="19.25" cy="121.44" r="1.9"/><circle cx="26.00" cy="121.44" r="1.9"/><circle cx="32.80" cy="121.44" r="1.9"/><circle cx="39.50" cy="121.44" r="1.9"/><circle cx="23.10" cy="129.02" r="1.9"/><circle cx="30.00" cy="129.02" r="1.9"/><circle cx="36.80" cy="129.02" r="1.9"/><circle cx="43.50" cy="129.02" r="1.9"/></g></svg>
<svg class="abs" style="left:31.00px;top:180.00px;" width="222.00" height="145.00" viewBox="0 0 222 145"><g fill="#fff"><polygon points="52.2,34.2 201.8,34.2 203,35.8 53.8,35.8"/><polygon points="87.2,90.5 196.4,90.5 197.4,92 88.6,92"/><rect x="124" y="95.1" width="79.4" height="1"/><circle cx="174.60" cy="30.75" r="1.05"/><circle cx="179.30" cy="30.75" r="1.05"/><circle cx="184.00" cy="30.75" r="1.05"/><circle cx="188.70" cy="30.75" r="1.05"/><circle cx="193.40" cy="30.75" r="1.05"/><circle cx="111.50" cy="95.6" r="1.0"/><circle cx="116.00" cy="95.6" r="1.0"/><circle cx="120.50" cy="95.6" r="1.0"/></g></svg>
<span class="t" style="left:88.00px;top:222.29px;font-size:27.00px;color:#000;font-weight:bold;letter-spacing:0.929px;-webkit-text-stroke:0.9px #000;">Mystique</span>
<span class="t" style="left:153.00px;top:253.80px;font-size:7.40px;color:#000;font-weight:bold;font-family:'Liberation Serif',serif;letter-spacing:-0.016px;-webkit-text-stroke:0.3px #000;">ANTIPERSPIRANT</span>
<span class="t" style="left:88.40px;top:283.20px;font-size:4.70px;color:#fff;font-weight:bold;font-family:'Liberation Serif',serif;letter-spacing:0.071px;-webkit-text-stroke:0.2px #fff;">DELICATE ROSE SCENT</span>
<span class="t" style="left:88.40px;top:291.35px;font-size:4.60px;color:rgba(255,255,255,.72);font-family:'Liberation Serif',serif;letter-spacing:0.050px;">5X THE ODOR PROTECTION</span>
<span class="t" style="left:88.40px;top:297.35px;font-size:4.60px;color:rgba(255,255,255,.72);font-family:'Liberation Serif',serif;letter-spacing:0.026px;">OF OTHER BRANDS</span>
<svg class="abs" style="left:150.00px;top:270.00px;" width="110.00" height="60.00" viewBox="0 0 110 60"><polygon points="54.20,10.70 60.02,16.59 70.50,12.13 70.77,18.56 84.32,16.21 78.99,22.19 93.56,22.31 83.45,26.93 96.80,29.50 83.45,32.07 93.56,36.69 78.99,36.81 84.32,42.79 70.77,40.44 70.50,46.87 60.02,42.41 54.20,48.30 48.38,42.41 37.90,46.87 37.63,40.44 24.08,42.79 29.41,36.81 14.84,36.69 24.95,32.07 11.60,29.50 24.95,26.93 14.84,22.31 29.41,22.19 24.08,16.21 37.63,18.56 37.90,12.13 48.38,16.59" fill="#ffff00" stroke="#000" stroke-width="0.9" stroke-linejoin="miter"/></svg>
<span class="t" style="left:194.40px;top:291.90px;font-size:7.60px;color:#000;font-weight:bold;font-family:'Liberation Serif',serif;letter-spacing:0.817px;-webkit-text-stroke:0.3px #000;">NEW</span>
<span class="t" style="left:189.00px;top:302.80px;font-size:4.90px;color:#000;font-weight:bold;font-family:'Liberation Serif',serif;letter-spacing:0.225px;-webkit-text-stroke:0.25px #000;">VALUE SIZE</span>
<div class="lbl" style="left:28.30px;top:197.20px;width:10.90px;height:29.80px;"></div>
<span class="rot" style="left:29.93px;top:224.90px;font-size:8.00px;color:#000;transform:rotate(-90deg);letter-spacing:0.117px;">Top</span>
<div class="pink" style="left:274.00px;top:180.00px;width:217.00px;height:144.60px;"></div>
<div class="ol2" style="left:288.30px;top:186.20px;width:191.70px;height:132.20px;"></div>
<svg class="abs" style="left:291.30px;top:189.40px;" width="4.40" height="4.40" viewBox="0 0 4.4 4.4"><path d="M2.20 0 V4.40 M0 2.20 H4.40" stroke="#fff" stroke-width="0.70"/></svg><span class="t" style="left:297.50px;top:190.80px;font-size:3.70px;color:#fff;font-weight:bold;font-family:'Liberation Serif',serif;letter-spacing:0.534px;-webkit-text-stroke:0.2px #fff;">MYSTIQUE</span><div class="abs" style="left:322.40px;top:191.40px;width:1.60px;height:0.70px;background:rgba(255,255,255,.8)"></div>
<span class="t" style="left:291.90px;top:310.70px;font-size:3.90px;color:#fff;font-weight:bold;font-family:'Liberation Serif',serif;letter-spacing:-0.229px;-webkit-text-stroke:0.18px #fff;">GOT QUESTIONS? CALL US AT 1-800-MYSTIQUE</span>
<span class="t" style="left:452.60px;top:312.55px;font-size:2.40px;color:rgba(255,255,255,.85);font-weight:bold;font-family:'Liberation Serif',serif;letter-spacing:0.181px;">MADE IN CHINA</span>
<div class="lbl" style="left:271.20px;top:197.20px;width:13.50px;height:29.80px;"></div>
<span class="rot" style="left:273.93px;top:224.20px;font-size:8.00px;color:#000;transform:rotate(-90deg);letter-spacing:-0.026px;">Bottom</span>
<div class="pink" style="left:522.00px;top:187.20px;width:213.80px;height:131.90px;"></div>
<div class="ol" style="left:528.20px;top:195.10px;width:196.80px;height:55.30px;"></div>
<div class="abs" style="left:529.00px;top:208.95px;width:195.20px;height:0.70px;background:#f774d4"></div>
<div class="abs" style="left:529.00px;top:237.15px;width:195.20px;height:0.70px;background:#f774d4"></div>
<div class="ol" style="left:528.80px;top:254.10px;width:161.60px;height:55.30px;"></div>
<div class="ol2" style="left:543.20px;top:268.30px;width:133.60px;height:28.30px;"></div>
<svg class="abs" style="left:639.20px;top:270.70px;" width="4.40" height="4.40" viewBox="0 0 4.4 4.4"><path d="M2.20 0 V4.40 M0 2.20 H4.40" stroke="#fff" stroke-width="0.70"/></svg><span class="t" style="left:646.00px;top:273.70px;font-size:3.70px;color:#fff;font-weight:bold;font-family:'Liberation Serif',serif;letter-spacing:0.601px;-webkit-text-stroke:0.2px #fff;">MYSTIQUE</span><div class="abs" style="left:671.40px;top:274.30px;width:1.60px;height:0.70px;background:rgba(255,255,255,.8)"></div>
<div class="lbl" style="left:511.10px;top:197.20px;width:12.50px;height:51.70px;background:#fff"></div>
<div class="abs" style="left:522.00px;top:197.20px;width:1.60px;height:51.70px;background:rgba(251,131,217,.75)"></div>
<span class="rot" style="left:514.53px;top:247.70px;font-size:8.00px;color:#000;transform:rotate(-90deg);letter-spacing:0.175px;">Front top</span>
<div class="lbl" style="left:511.10px;top:262.30px;width:13.70px;height:45.50px;background:#fff"></div>
<div class="abs" style="left:522.00px;top:263.30px;width:1.80px;height:43.50px;background:rgba(251,131,217,.75)"></div>
<span class="rot" style="left:514.63px;top:305.70px;font-size:8.00px;color:#000;transform:rotate(-90deg);letter-spacing:-0.317px;">Top Side L</span>
<div class="pink" style="left:756.00px;top:188.80px;width:180.00px;height:112.20px;"></div>
<div class="ol" style="left:761.20px;top:197.00px;width:162.00px;height:56.30px;"></div>
<div class="ol2" style="left:774.00px;top:210.80px;width:135.00px;height:28.90px;"></div>
<svg class="abs" style="left:777.40px;top:214.50px;" width="4.40" height="4.40" viewBox="0 0 4.4 4.4"><path d="M2.20 0 V4.40 M0 2.20 H4.40" stroke="#fff" stroke-width="0.70"/></svg><span class="t" style="left:784.00px;top:217.70px;font-size:3.70px;color:#fff;font-weight:bold;font-family:'Liberation Serif',serif;letter-spacing:0.601px;-webkit-text-stroke:0.2px #fff;">MYSTIQUE</span><div class="abs" style="left:809.40px;top:218.30px;width:1.60px;height:0.70px;background:rgba(255,255,255,.8)"></div>
<div class="ol2" style="left:768.20px;top:262.20px;width:64.60px;height:26.30px;"></div>
<svg class="abs" style="left:768.00px;top:262.00px;" width="66.00" height="27.00" viewBox="0 0 66 27"><polygon points="5.1,3.7 29.9,3.7 27.8,23 2.9,23" fill="#fdb9ea"/><g fill="#2a0a2a" opacity=".38"><rect x="39.40" y="3.90" width="17.60" height="0.8"/><rect x="40.00" y="5.28" width="16.40" height="0.8"/><rect x="41.00" y="6.66" width="14.40" height="0.8"/><rect x="39.80" y="8.04" width="16.80" height="0.8"/><rect x="40.30" y="9.42" width="15.80" height="0.8"/><rect x="45.90" y="10.80" width="4.60" height="0.8"/><rect x="39.70" y="13.20" width="17.00" height="0.8"/><rect x="39.40" y="14.50" width="17.60" height="0.8"/><rect x="42.60" y="15.80" width="11.20" height="0.8"/></g><rect x="39.4" y="3.8" width="7.6" height="0.9" fill="#1a001a" opacity=".55"/><rect x="39.6" y="13.1" width="6.4" height="0.9" fill="#1a001a" opacity=".5"/><rect x="40" y="18.5" width="17" height="5.5" fill="#fff"/><rect x="41.50" y="19.7" width="0.75" height="2.8" fill="#222"/><rect x="42.50" y="19.7" width="0.55" height="2.8" fill="#222"/><rect x="43.50" y="19.7" width="0.55" height="2.8" fill="#222"/><rect x="44.50" y="19.7" width="0.75" height="2.8" fill="#222"/><rect x="45.50" y="19.7" width="0.55" height="2.8" fill="#222"/><rect x="46.50" y="19.7" width="0.55" height="2.8" fill="#222"/><rect x="47.50" y="19.7" width="0.75" height="2.8" fill="#222"/><rect x="48.50" y="19.7" width="0.55" height="2.8" fill="#222"/><rect x="49.50" y="19.7" width="0.55" height="2.8" fill="#222"/><rect x="50.50" y="19.7" width="0.75" height="2.8" fill="#222"/><rect x="51.50" y="19.7" width="0.55" height="2.8" fill="#222"/><rect x="52.50" y="19.7" width="0.55" height="2.8" fill="#222"/><rect x="53.50" y="19.7" width="0.75" height="2.8" fill="#222"/><rect x="54.50" y="19.7" width="0.55" height="2.8" fill="#222"/><rect x="14.6" y="14.3" width="13.2" height="0.75" fill="#000" opacity=".75"/><rect x="11" y="16.3" width="16" height="0.6" fill="#fff" opacity=".9"/><rect x="5" y="17.1" width="12.8" height="0.6" fill="#fff" opacity=".6"/><rect x="5" y="18.4" width="10" height="0.6" fill="#fff" opacity=".5"/></svg>
<span class="t" style="left:772.90px;top:269.95px;font-size:5.30px;color:#000;font-weight:bold;font-style:italic;letter-spacing:0.031px;-webkit-text-stroke:0.3px #000;">Mystique</span>
<div class="lbl" style="left:768.00px;top:295.70px;width:73.80px;height:12.00px;"></div>
<div class="abs" style="left:768.50px;top:301.00px;width:72.80px;height:6.20px;background:#fff"></div>
<span class="t" style="left:769.80px;top:298.22px;font-size:7.70px;color:#111;letter-spacing:0.070px;">Deodorant label</span>
<div class="lbl" style="left:944.40px;top:204.50px;width:14.20px;height:57.20px;background:#fff"></div>
<span class="rot" style="left:955.07px;top:206.70px;font-size:8.00px;color:#000;transform:rotate(90deg);letter-spacing:-0.404px;">Top Side R</span>
<div class="pink" style="left:39.50px;top:338.00px;width:178.50px;height:115.60px;"></div>
<div class="ol" style="left:46.00px;top:347.20px;width:160.60px;height:99.70px;"></div>
<div class="ol2" style="left:58.00px;top:362.20px;width:133.60px;height:71.10px;"></div>
<span class="t" style="left:62.00px;top:428.15px;font-size:3.60px;color:#fff;font-weight:bold;font-family:'Liberation Serif',serif;letter-spacing:-0.110px;-webkit-text-stroke:0.18px #fff;">CALL US AT 1-800-MYSTIQUE</span>
<div class="lbl" style="left:222.30px;top:344.10px;width:15.30px;height:30.50px;background:#fff"></div>
<span class="rot" style="left:234.07px;top:346.00px;font-size:8.00px;color:#000;transform:rotate(90deg);letter-spacing:-0.380px;">Side L</span>
<div class="pink" style="left:279.40px;top:336.00px;width:173.40px;height:113.60px;"></div>
<div class="ol" style="left:285.30px;top:342.10px;width:160.00px;height:99.50px;"></div>
<div class="ol2" style="left:299.00px;top:355.80px;width:133.00px;height:71.80px;"></div>
<span class="t" style="left:389.60px;top:421.95px;font-size:3.60px;color:#fff;font-weight:bold;font-family:'Liberation Serif',serif;letter-spacing:-0.188px;-webkit-text-stroke:0.18px #fff;">WWW.MYSTIQUE.COM</span>
<div class="lbl" style="left:456.30px;top:344.10px;width:15.30px;height:30.50px;background:#fff"></div>
<span class="rot" style="left:468.07px;top:346.00px;font-size:8.00px;color:#000;transform:rotate(90deg);letter-spacing:-0.457px;">Side R</span>
<div class="pink" style="left:522.00px;top:343.40px;width:205.40px;height:116.40px;"></div>
<div class="ol" style="left:528.20px;top:350.90px;width:193.00px;height:98.90px;"></div>
<div class="abs" style="left:529.00px;top:363.95px;width:191.40px;height:0.70px;background:#f774d4"></div>
<div class="abs" style="left:529.00px;top:435.15px;width:191.40px;height:0.70px;background:#f774d4"></div>
<span class="t" style="left:562.00px;top:401.12px;font-size:19.20px;color:#000;font-weight:bold;letter-spacing:1.230px;-webkit-text-stroke:0.65px #000;">Mystique</span>
<svg class="abs" style="left:655.00px;top:412.00px;" width="35.00" height="8.00" viewBox="0 0 35 8"><g fill="#fff"><circle cx="6.20" cy="4.4" r="1.0"/><circle cx="10.80" cy="4.4" r="1.0"/><circle cx="15.40" cy="4.4" r="1.0"/><circle cx="20.00" cy="4.4" r="1.0"/><circle cx="24.60" cy="4.4" r="1.0"/><circle cx="29.20" cy="4.4" r="1.0"/></g></svg>
<div class="abs" style="left:562.00px;top:423.65px;width:60.00px;height:1.50px;background:#fdb9ea"></div>
<span class="t" style="left:633.70px;top:421.00px;font-size:5.30px;color:#000;font-weight:bold;font-family:'Liberation Serif',serif;letter-spacing:0.386px;-webkit-text-stroke:0.25px #000;">ANTIPERSPIRANT</span>
<div class="lbl" style="left:509.30px;top:356.10px;width:11.50px;height:29.70px;background:#fff"></div>
<span class="rot" style="left:512.53px;top:383.50px;font-size:8.00px;color:#000;transform:rotate(-90deg);letter-spacing:-0.172px;">Front</span>
<div class="pink" style="left:759.50px;top:342.60px;width:206.80px;height:116.40px;"></div>
<div class="ol" style="left:765.80px;top:350.70px;width:192.70px;height:100.70px;"></div>
<div class="abs" style="left:766.60px;top:363.95px;width:191.10px;height:0.70px;background:#f774d4"></div>
<div class="abs" style="left:766.60px;top:436.15px;width:191.10px;height:0.70px;background:#f774d4"></div>
<div class="abs" style="left:771.00px;top:368.80px;width:137.30px;height:64.00px;background:#fff"></div>
<div class="abs" style="left:774.20px;top:371.75px;width:59.40px;height:1.30px;background:#fdb9ea"></div>
<span class="t" style="left:776.00px;top:375.34px;font-size:13.00px;color:#000;font-weight:bold;font-family:'Liberation Serif',serif;letter-spacing:0.213px;-webkit-text-stroke:0.35px #000;">Mystique</span>
<svg class="abs" style="left:830.40px;top:384.20px;" width="7.00" height="3.00" viewBox="0 0 7 3"><path d="M0.2 0.5 H2.4 M1.3 0.5 V2.6 M3.2 2.6 V0.5 L4.5 2 L5.8 0.5 V2.6" fill="none" stroke="#000" stroke-width="0.7"/></svg>
<span class="t" style="left:776.00px;top:394.47px;font-size:4.20px;color:#3c3c3c;font-family:'Liberation Serif',serif;letter-spacing:0.260px;">Is the number one antiperspirant brand on the market. Made with</span>
<span class="t" style="left:776.00px;top:400.82px;font-size:4.20px;color:#3c3c3c;font-family:'Liberation Serif',serif;letter-spacing:0.212px;">the highest quality of ingredients, Mystique&trade; is formulated for the</span>
<span class="t" style="left:776.00px;top:407.17px;font-size:4.20px;color:#3c3c3c;font-family:'Liberation Serif',serif;letter-spacing:0.262px;">woman on the road. With our new value size you can experience</span>
<span class="t" style="left:776.00px;top:413.52px;font-size:4.20px;color:#3c3c3c;font-family:'Liberation Serif',serif;letter-spacing:0.193px;">all day freshness for even longer!</span>
<div class="abs" style="left:854.00px;top:409.95px;width:6.00px;height:0.50px;background:#4a78c8"></div>
<span class="t" style="left:776.00px;top:424.50px;font-size:3.90px;color:#000;font-weight:bold;font-family:'Liberation Serif',serif;letter-spacing:-0.239px;-webkit-text-stroke:0.15px #000;">GOT QUESTIONS? CALL US AT 1-800-MYSTIQUE</span>
<svg class="abs" style="left:893.00px;top:427.00px;" width="15.00" height="5.00" viewBox="0 0 15 5"><circle cx="2.90" cy="2.3" r="0.8" fill="#f77fd5"/><circle cx="7.45" cy="2.3" r="0.8" fill="#f77fd5"/><circle cx="12.00" cy="2.3" r="0.8" fill="#f77fd5"/></svg>
<svg class="abs" style="left:901px;top:369.30px" width="62" height="2.4" viewBox="0 0 62 2.4"><rect x="12.00" y="0.15" width="16.95" height="2.10" fill="rgba(20,5,20,.62)"/><rect x="29.79" y="0.30" width="11.30" height="1.80" fill="rgba(40,10,45,.3)"/><rect x="41.94" y="0.30" width="7.06" height="1.80" fill="rgba(40,10,45,.3)"/></svg>
<svg class="abs" style="left:901px;top:372.40px" width="62" height="2.4" viewBox="0 0 62 2.4"><rect x="12.50" y="0.30" width="18.57" height="1.80" fill="rgba(40,10,45,.3)"/><rect x="31.93" y="0.30" width="10.00" height="1.80" fill="rgba(40,10,45,.3)"/><rect x="42.79" y="0.30" width="5.71" height="1.80" fill="rgba(40,10,45,.3)"/></svg>
<svg class="abs" style="left:901px;top:375.50px" width="62" height="2.4" viewBox="0 0 62 2.4"><rect x="17.00" y="0.30" width="8.90" height="1.80" fill="rgba(40,10,45,.3)"/><rect x="26.79" y="0.30" width="5.93" height="1.80" fill="rgba(40,10,45,.3)"/><rect x="33.62" y="0.30" width="10.38" height="1.80" fill="rgba(40,10,45,.3)"/></svg>
<svg class="abs" style="left:901px;top:378.60px" width="62" height="2.4" viewBox="0 0 62 2.4"><rect x="12.75" y="0.30" width="11.00" height="1.80" fill="rgba(40,10,45,.3)"/><rect x="24.69" y="0.30" width="23.56" height="1.80" fill="rgba(40,10,45,.3)"/></svg>
<svg class="abs" style="left:901px;top:381.70px" width="62" height="2.4" viewBox="0 0 62 2.4"><rect x="11.85" y="0.30" width="12.86" height="1.80" fill="rgba(40,10,45,.3)"/><rect x="25.68" y="0.30" width="12.86" height="1.80" fill="rgba(40,10,45,.3)"/><rect x="39.50" y="0.30" width="9.65" height="1.80" fill="rgba(40,10,45,.3)"/></svg>
<svg class="abs" style="left:901px;top:384.80px" width="62" height="2.4" viewBox="0 0 62 2.4"><rect x="16.25" y="0.30" width="17.45" height="1.80" fill="rgba(40,10,45,.3)"/><rect x="34.57" y="0.30" width="10.18" height="1.80" fill="rgba(40,10,45,.3)"/></svg>
<svg class="abs" style="left:901px;top:389.70px" width="62" height="2.4" viewBox="0 0 62 2.4"><rect x="18.00" y="0.15" width="16.57" height="2.10" fill="rgba(20,5,20,.62)"/><rect x="35.47" y="0.30" width="7.53" height="1.80" fill="rgba(40,10,45,.3)"/></svg>
<svg class="abs" style="left:901px;top:392.80px" width="62" height="2.4" viewBox="0 0 62 2.4"><rect x="19.00" y="0.30" width="15.22" height="1.80" fill="rgba(40,10,45,.3)"/><rect x="35.24" y="0.30" width="6.76" height="1.80" fill="rgba(40,10,45,.3)"/></svg>
<svg class="abs" style="left:901px;top:395.90px" width="62" height="2.4" viewBox="0 0 62 2.4"><rect x="12.15" y="0.30" width="12.03" height="1.80" fill="rgba(40,10,45,.3)"/><rect x="25.09" y="0.30" width="3.01" height="1.80" fill="rgba(40,10,45,.3)"/><rect x="29.00" y="0.30" width="4.51" height="1.80" fill="rgba(40,10,45,.3)"/><rect x="34.41" y="0.30" width="7.52" height="1.80" fill="rgba(40,10,45,.3)"/><rect x="42.83" y="0.30" width="6.02" height="1.80" fill="rgba(40,10,45,.3)"/></svg>
<svg class="abs" style="left:901px;top:399.00px" width="62" height="2.4" viewBox="0 0 62 2.4"><rect x="17.25" y="0.30" width="9.81" height="1.80" fill="rgba(40,10,45,.3)"/><rect x="28.05" y="0.30" width="6.54" height="1.80" fill="rgba(40,10,45,.3)"/><rect x="35.57" y="0.30" width="8.18" height="1.80" fill="rgba(40,10,45,.3)"/></svg>
<div class="abs" style="left:913.20px;top:407.80px;width:39.70px;height:25.20px;background:#fff"></div>
<svg class="abs" style="left:917.20px;top:410.40px;" width="32.00" height="21.00" viewBox="0 0 32 21"><g fill="#0a0a0a"><rect x="0.00" y="0" width="0.55" height="20.4"/><rect x="0.99" y="0" width="0.80" height="20.4"/><rect x="1.98" y="0" width="0.50" height="18.2"/><rect x="2.97" y="0" width="0.65" height="18.2"/><rect x="3.96" y="0" width="0.90" height="18.2"/><rect x="4.95" y="0" width="0.50" height="18.2"/><rect x="5.94" y="0" width="0.60" height="18.2"/><rect x="6.93" y="0" width="0.85" height="18.2"/><rect x="7.92" y="0" width="0.50" height="18.2"/><rect x="8.91" y="0" width="0.70" height="18.2"/><rect x="9.90" y="0" width="0.55" height="18.2"/><rect x="10.89" y="0" width="0.90" height="18.2"/><rect x="11.88" y="0" width="0.60" height="18.2"/><rect x="12.87" y="0" width="0.50" height="18.2"/><rect x="13.86" y="0" width="0.80" height="18.2"/><rect x="14.85" y="0" width="0.60" height="20.4"/><rect x="15.84" y="0" width="0.95" height="20.4"/><rect x="16.83" y="0" width="0.50" height="18.2"/><rect x="17.82" y="0" width="0.65" height="18.2"/><rect x="18.81" y="0" width="0.80" height="18.2"/><rect x="19.80" y="0" width="0.50" height="18.2"/><rect x="20.79" y="0" width="0.60" height="18.2"/><rect x="21.78" y="0" width="0.90" height="18.2"/><rect x="22.77" y="0" width="0.55" height="18.2"/><rect x="23.76" y="0" width="0.70" height="18.2"/><rect x="24.75" y="0" width="0.50" height="18.2"/><rect x="25.74" y="0" width="0.85" height="18.2"/><rect x="26.73" y="0" width="0.60" height="18.2"/><rect x="27.72" y="0" width="0.55" height="18.2"/><rect x="28.71" y="0" width="0.80" height="18.2"/><rect x="29.70" y="0" width="0.60" height="20.4"/><rect x="30.69" y="0" width="0.70" height="20.4"/></g></svg>
<svg class="abs" style="left:917.20px;top:410.40px;" width="32.00" height="21.00" viewBox="0 0 32 21"><rect x="3.00" y="18.7" width="1.3" height="2" fill="#fff"/><rect x="3.20" y="19" width="0.9" height="1.6" fill="#555"/><rect x="5.30" y="18.7" width="1.3" height="2" fill="#fff"/><rect x="5.50" y="19" width="0.9" height="1.6" fill="#555"/><rect x="7.60" y="18.7" width="1.3" height="2" fill="#fff"/><rect x="7.80" y="19" width="0.9" height="1.6" fill="#555"/><rect x="9.90" y="18.7" width="1.3" height="2" fill="#fff"/><rect x="10.10" y="19" width="0.9" height="1.6" fill="#555"/><rect x="12.20" y="18.7" width="1.3" height="2" fill="#fff"/><rect x="12.40" y="19" width="0.9" height="1.6" fill="#555"/><rect x="16.10" y="18.7" width="1.3" height="2" fill="#fff"/><rect x="16.30" y="19" width="0.9" height="1.6" fill="#555"/><rect x="18.40" y="18.7" width="1.3" height="2" fill="#fff"/><rect x="18.60" y="19" width="0.9" height="1.6" fill="#555"/><rect x="20.70" y="18.7" width="1.3" height="2" fill="#fff"/><rect x="20.90" y="19" width="0.9" height="1.6" fill="#555"/><rect x="23.00" y="18.7" width="1.3" height="2" fill="#fff"/><rect x="23.20" y="19" width="0.9" height="1.6" fill="#555"/><rect x="25.30" y="18.7" width="1.3" height="2" fill="#fff"/><rect x="25.50" y="19" width="0.9" height="1.6" fill="#555"/><rect x="27.60" y="18.7" width="1.3" height="2" fill="#fff"/><rect x="27.80" y="19" width="0.9" height="1.6" fill="#555"/></svg>
<div class="abs" style="left:914.60px;top:429.60px;width:1.00px;height:1.50px;background:#666"></div>
<div class="abs" style="left:950.40px;top:429.60px;width:1.00px;height:1.50px;background:#666"></div>
<div class="abs" style="left:989.40px;top:447.50px;width:31.00px;height:30.80px;background:#b2b2b6;border:2px solid #d6d6d8;border-radius:6px"></div>
<svg class="abs" style="left:996.00px;top:452.50px;" width="18.00" height="21.00" viewBox="0 0 18 21"><defs><linearGradient id="fb" x1="0" y1="0" x2="1" y2="1"><stop offset="0" stop-color="#a9c8ea"/><stop offset="1" stop-color="#d4e3f3"/></linearGradient></defs><polygon points="8.5,2 14.8,2.8 9.2,10.4 2.4,10" fill="url(#fb)"/><polygon points="8.6,10.6 15.2,9.4 9.6,17.4 2.6,18.6" fill="url(#fb)"/></svg>
<div class="abs" style="left:0.00px;top:525.80px;width:1024.00px;height:16.80px;background:#f5f5f5;border-top:0.6px solid #ebebeb"></div>
<span class="t" style="left:5.50px;top:531.08px;font-size:7.40px;color:#444;letter-spacing:-0.058px;">Page 1 of 8</span>
<span class="t" style="left:55.60px;top:531.08px;font-size:7.40px;color:#444;letter-spacing:-0.166px;">170 words</span>
<svg class="abs" style="left:101.60px;top:529.80px;" width="10.00" height="10.00" viewBox="0 0 10 10"><path d="M0.5 0.6 H4.4 V8.6 H0.5 Z M4.4 0.6 H8.4 V4.6" fill="none" stroke="#444" stroke-width="0.8"/><path d="M5.6 6 L9 9.4 M9 6 L5.6 9.4" stroke="#444" stroke-width="0.8"/></svg>
<span class="t" style="left:124.40px;top:531.08px;font-size:7.40px;color:#444;letter-spacing:-0.181px;">English (Canada)</span>
<span class="t" style="left:191.50px;top:531.08px;font-size:7.40px;color:#444;letter-spacing:-0.033px;">Text Predictions: On</span>
<svg class="abs" style="left:269.50px;top:529.60px;" width="10.00" height="10.40" viewBox="0 0 10 10.4"><circle cx="4.8" cy="1.6" r="1.1" fill="none" stroke="#444" stroke-width="0.8"/><path d="M0.6 3.6 L4.8 4.6 L9 3.6 M4.8 4.6 V6.8 M4.8 6.8 L2.4 10 M4.8 6.8 L7.2 10" fill="none" stroke="#444" stroke-width="0.8" stroke-linecap="round"/><path d="M0.8 0.6 L8.8 9.8" stroke="#444" stroke-width="0.6"/></svg>
<span class="t" style="left:283.00px;top:531.08px;font-size:7.40px;color:#444;letter-spacing:-0.044px;">Accessibility: Investigate</span>
<svg class="abs" style="left:773.50px;top:530.00px;" width="9.40" height="9.60" viewBox="0 0 9.4 9.6"><path d="M0.5 2.6 V0.5 H2.6 M6.8 0.5 H8.9 V2.6 M8.9 7 V9.1 H6.8 M2.6 9.1 H0.5 V7" fill="none" stroke="#444" stroke-width="0.8"/><path d="M3 2.2 H5.4 L6.6 3.4 V7.4 H3 Z" fill="none" stroke="#444" stroke-width="0.7"/></svg>
<span class="t" style="left:787.00px;top:531.08px;font-size:7.40px;color:#444;letter-spacing:-0.365px;">Focus</span>
<svg class="abs" style="left:821.60px;top:530.20px;" width="11.00" height="9.00" viewBox="0 0 11 9"><path d="M5.5 1.4 Q3 0.2 0.5 1 V8 Q3 7.2 5.5 8.4 Q8 7.2 10.5 8 V1 Q8 0.2 5.5 1.4 Z M5.5 1.4 V8.4" fill="none" stroke="#444" stroke-width="0.8" stroke-linejoin="round"/><path d="M2 3 H4 M2 4.8 H4 M7 3 H9 M7 4.8 H9" stroke="#444" stroke-width="0.6"/></svg>
<div class="abs" style="left:842.00px;top:526.60px;width:28.00px;height:16.00px;background:#dadada"></div>
<svg class="abs" style="left:851.00px;top:529.40px;" width="9.60" height="10.20" viewBox="0 0 9.6 10.2"><rect x="0.6" y="0.6" width="8.4" height="9" rx="1.4" fill="#cfcfcf" stroke="#555" stroke-width="0.9"/><path d="M2.4 3.4 H7.2 M2.4 6.2 H7.2" stroke="#555" stroke-width="1.1"/></svg>
<svg class="abs" style="left:879.00px;top:529.40px;" width="10.40" height="10.40" viewBox="0 0 10.4 10.4"><rect x="0.6" y="0.6" width="8" height="8.4" rx="1" fill="none" stroke="#444" stroke-width="0.8"/><path d="M0.6 2.8 H8.6 M2.2 4.6 H5 M2.2 6.4 H4" stroke="#444" stroke-width="0.7"/><circle cx="7.4" cy="7.4" r="2.6" fill="#444"/><path d="M5 7.4 H9.8 M7.4 5 V9.8" stroke="#f4f4f4" stroke-width="0.5"/></svg>
<div class="abs" style="left:902.80px;top:534.20px;width:5.00px;height:0.90px;background:#555"></div>
<div class="abs" style="left:912.30px;top:534.20px;width:70.40px;height:0.90px;background:#6a6a6a"></div>
<div class="abs" style="left:947.00px;top:532.80px;width:0.90px;height:3.80px;background:#6a6a6a"></div>
<div class="abs" style="left:917.50px;top:530.60px;width:3.40px;height:8.00px;background:#444;border-radius:0.5px"></div>
<svg class="abs" style="left:986.60px;top:532.00px;" width="5.40" height="5.40" viewBox="0 0 5.4 5.4"><path d="M2.7 0 V5.4 M0 2.7 H5.4" stroke="#555" stroke-width="0.9"/></svg>
<span class="t" style="left:1001.10px;top:531.29px;font-size:7.00px;color:#444;letter-spacing:-0.126px;">25%</span>
<div class="abs" style="left:0.00px;top:542.60px;width:1024.00px;height:33.40px;background:linear-gradient(90deg,#f9e3d2 0%,#f8e5d7 20%,#f5eae0 40%,#f2efeb 58%,#eff0ec 74%,#f5f1e1 86%,#f5f0e6 93%,#f3efee 100%);border-top:1px solid #e6dcd4"></div>
<div class="abs" style="left:15.00px;top:551.00px;width:14.00px;height:14.00px;border-radius:50%;background:radial-gradient(circle at 35% 30%,#f9bb38 0%,#f59a23 45%,#ee6a1c 100%)"></div>
<span class="t" style="left:35.80px;top:549.35px;font-size:8.40px;color:#222;letter-spacing:-0.434px;">20&deg;C</span>
<span class="t" style="left:35.80px;top:560.55px;font-size:8.40px;color:#6a6a6a;letter-spacing:-0.033px;">Sunny</span>
<svg class="abs" style="left:329.80px;top:550.60px;" width="16.80" height="16.80" viewBox="0 0 16.8 16.8"><defs><linearGradient id="wl" x1="0" y1="0" x2="1" y2="1"><stop offset="0" stop-color="#5bcbfb"/><stop offset="1" stop-color="#0a78d6"/></linearGradient></defs><g fill="url(#wl)"><rect x="0" y="0" width="8" height="8" rx="0.6"/><rect x="8.8" y="0" width="8" height="8" rx="0.6"/><rect x="0" y="8.8" width="8" height="8" rx="0.6"/><rect x="8.8" y="8.8" width="8" height="8" rx="0.6"/></g></svg>
<div class="abs" style="left:356.60px;top:548.20px;width:154.80px;height:21.20px;background:#fcf7f2;border-radius:10.6px;border:0.5px solid #eadfd6"></div>
<svg class="abs" style="left:363.80px;top:553.80px;" width="11.00" height="11.00" viewBox="0 0 11 11"><circle cx="4.6" cy="4.6" r="3.6" fill="none" stroke="#222" stroke-width="1.2"/><path d="M7.2 7.2 L10 10" stroke="#222" stroke-width="1.3" stroke-linecap="round"/></svg>
<span class="t" style="left:382.50px;top:555.73px;font-size:9.00px;color:#666;letter-spacing:0.013px;">Search</span>
<svg class="abs" style="left:476.00px;top:549.60px;" width="32.00" height="20.00" viewBox="0 0 32 20"><ellipse cx="17" cy="17.6" rx="14" ry="1.6" fill="#9a9a9a" opacity=".45"/><circle cx="7" cy="12.4" r="4.8" fill="#f7efe9" stroke="#2c3068" stroke-width="1.1"/><circle cx="23.6" cy="11.4" r="4.8" fill="#f7efe9" stroke="#2c3068" stroke-width="1.1"/><path d="M7 12.4 L11 5 H19.6 L14.6 12.6 Z M19.6 5 L23.6 11.4 M18 1.6 H21 M19.4 1.6 L20 5 M9.4 4 H12.4" fill="none" stroke="#e3566a" stroke-width="1.2" stroke-linejoin="round" stroke-linecap="round"/></svg>
<div class="abs" style="left:520.80px;top:555.60px;width:12.60px;height:11.40px;background:#1f1f1f;border-radius:1.6px"></div>
<div class="abs" style="left:526.00px;top:550.80px;width:12.40px;height:11.20px;background:linear-gradient(135deg,#fdfdfd,#cfcfcf);border-radius:1.6px;opacity:.92"></div>
<svg class="abs" style="left:552.40px;top:550.60px;" width="17.00" height="17.40" viewBox="0 0 17 17.4"><defs><linearGradient id="tm" x1="0" y1="0" x2="1" y2="1"><stop offset="0" stop-color="#8b8ff0"/><stop offset="1" stop-color="#5558c4"/></linearGradient></defs><path d="M8.6 0.6 A7.8 7.8 0 1 1 4.4 15 L0.8 16.6 L1.8 12.6 A7.8 7.8 0 0 1 8.6 0.6 Z" fill="url(#tm)"/><rect x="4.4" y="5.6" width="6" height="5.4" rx="1.2" fill="#fff"/><path d="M10.8 7.6 L13.2 6 V10.6 L10.8 9 Z" fill="#fff"/></svg>
<svg class="abs" style="left:583.60px;top:551.20px;" width="17.80" height="15.40" viewBox="0 0 17.8 15.4"><path d="M0.4 1.6 Q0.4 0.4 1.6 0.4 H6 L7.6 2 H16.2 Q17.4 2 17.4 3.2 V5 H0.4 Z" fill="#e8a317"/><rect x="0.4" y="3" width="17" height="12" rx="1.2" fill="#ffd04f"/><rect x="0.4" y="9" width="17" height="6" rx="1.2" fill="#f7bc2c"/><path d="M3.6 15 V11.4 Q3.6 10 5 10 H12.8 Q14.2 10 14.2 11.4 V15 Z" fill="#1f8ad8"/><rect x="3.6" y="13" width="10.6" height="2" fill="#1467b2"/></svg>
<div class="abs" style="left:590.00px;top:570.40px;width:4.60px;height:2.00px;background:#858585;border-radius:1px"></div>
<svg class="abs" style="left:614.60px;top:550.40px;" width="22.00" height="18.00" viewBox="0 0 22 18"><circle cx="8.8" cy="9" r="8.4" fill="#fbc116"/><path d="M8.8 9 L1.52 4.8 A8.4 8.4 0 0 1 16.08 4.8 Z" fill="#e33b2e"/><path d="M8.8 9 L1.52 4.8 A8.4 8.4 0 0 0 8.8 17.4 Z" fill="#2da94f" transform="rotate(0 8.8 9)"/><path d="M8.8 9 L4.6 16.27 A8.4 8.4 0 0 1 1.52 4.8 Z" fill="#2da94f"/><circle cx="8.8" cy="9" r="4" fill="#fff"/><circle cx="8.8" cy="9" r="3.1" fill="#4285f4"/><circle cx="15.6" cy="2" r="5.4" fill="#f4502a"/><text x="13.4" y="4.4" font-family="Liberation Sans" font-size="6.6" fill="#fff">R</text></svg>
<div class="abs" style="left:621.20px;top:570.40px;width:4.60px;height:2.00px;background:#858585;border-radius:1px"></div>
<svg class="abs" style="left:646.00px;top:551.20px;" width="17.60" height="15.40" viewBox="0 0 17.6 15.4"><defs><linearGradient id="wg2" x1="0" y1="0" x2="0" y2="1"><stop offset="0" stop-color="#41a5ee"/><stop offset=".5" stop-color="#2b7cd3"/><stop offset="1" stop-color="#103f91"/></linearGradient></defs><rect x="4.4" y="0.2" width="13" height="15" rx="1.2" fill="url(#wg2)"/><rect x="0.2" y="3.2" width="9.4" height="9.2" rx="1" fill="#185abd"/><path d="M2 5.4 L3.4 10.2 L4.9 6.6 L6.4 10.2 L7.8 5.4" fill="none" stroke="#fff" stroke-width="1.1" stroke-linejoin="round"/></svg>
<div class="abs" style="left:652.40px;top:570.40px;width:4.60px;height:2.00px;background:#858585;border-radius:1px"></div>
<div class="abs" style="left:673.00px;top:545.60px;width:26.60px;height:26.80px;background:rgba(255,255,255,.62);border-radius:4px;border:0.5px solid rgba(0,0,0,.04)"></div>
<svg class="abs" style="left:678.60px;top:551.40px;" width="17.00" height="16.40" viewBox="0 0 17 16.4"><path d="M1 8 V1 H8" fill="none" stroke="#d13a2c" stroke-width="1.3" stroke-dasharray="1.6 1"/><path d="M8.4 1 V7.4 M1 8 H5" fill="none" stroke="#d13a2c" stroke-width="1.3" stroke-dasharray="1.6 1"/><path d="M6.4 5 L13 11.6 M6.4 11 L12.4 7.4" stroke="#8c8c8c" stroke-width="1.2" stroke-linecap="round"/><circle cx="14.4" cy="6.6" r="1.7" fill="none" stroke="#2a97d8" stroke-width="1.1"/><circle cx="13.6" cy="13.6" r="1.7" fill="none" stroke="#2a97d8" stroke-width="1.1"/></svg>
<div class="abs" style="left:681.00px;top:570.40px;width:10.60px;height:2.00px;background:#2f8d46;border-radius:1px"></div>
<svg class="abs" style="left:857.00px;top:556.00px;" width="8.40" height="5.40" viewBox="0 0 8.4 5.4"><path d="M0.6 4.8 L4.2 1 L7.8 4.8" fill="none" stroke="#222" stroke-width="1.1" stroke-linecap="round" stroke-linejoin="round"/></svg>
<span class="t" style="left:879.70px;top:550.57px;font-size:8.20px;color:#222;letter-spacing:-0.460px;">ENG</span>
<span class="t" style="left:882.60px;top:561.87px;font-size:8.20px;color:#222;letter-spacing:-0.450px;">US</span>
<svg class="abs" style="left:909.40px;top:553.60px;" width="12.00" height="9.60" viewBox="0 0 12 9.6"><path d="M0.8 3.4 Q6 -1.6 11.2 3.4 M2.6 5.2 Q6 2 9.4 5.2 M4.3 6.9 Q6 5.4 7.7 6.9" fill="none" stroke="#222" stroke-width="1" stroke-linecap="round"/><circle cx="6" cy="8.4" r="0.9" fill="#222"/></svg>
<svg class="abs" style="left:926.00px;top:553.80px;" width="11.00" height="9.60" viewBox="0 0 11 9.6"><path d="M0.6 3.2 H2.6 L5.4 0.8 V8.8 L2.6 6.4 H0.6 Z" fill="none" stroke="#222" stroke-width="0.9" stroke-linejoin="round"/><path d="M6.8 3 Q8 4.8 6.8 6.6" fill="none" stroke="#222" stroke-width="0.8"/><path d="M8.2 1.6 Q10.4 4.8 8.2 8" fill="none" stroke="#999" stroke-width="0.8"/></svg>
<svg class="abs" style="left:942.60px;top:553.60px;" width="13.00" height="9.40" viewBox="0 0 13 9.4"><rect x="1.6" y="2.8" width="9.6" height="5.6" rx="1.2" fill="#222"/><rect x="11.4" y="4.4" width="1.2" height="2.4" rx="0.5" fill="#222"/><path d="M3 3 Q1.6 1 3.4 0.6 Q5.6 0.6 5 3" fill="none" stroke="#222" stroke-width="0.9"/></svg>
<span class="t" style="left:975.80px;top:550.07px;font-size:8.20px;color:#222;letter-spacing:-0.100px;">12:31 PM</span>
<span class="t" style="left:966.60px;top:561.57px;font-size:8.20px;color:#222;letter-spacing:0.212px;">2023-06-03</span>
</body>
</html>
